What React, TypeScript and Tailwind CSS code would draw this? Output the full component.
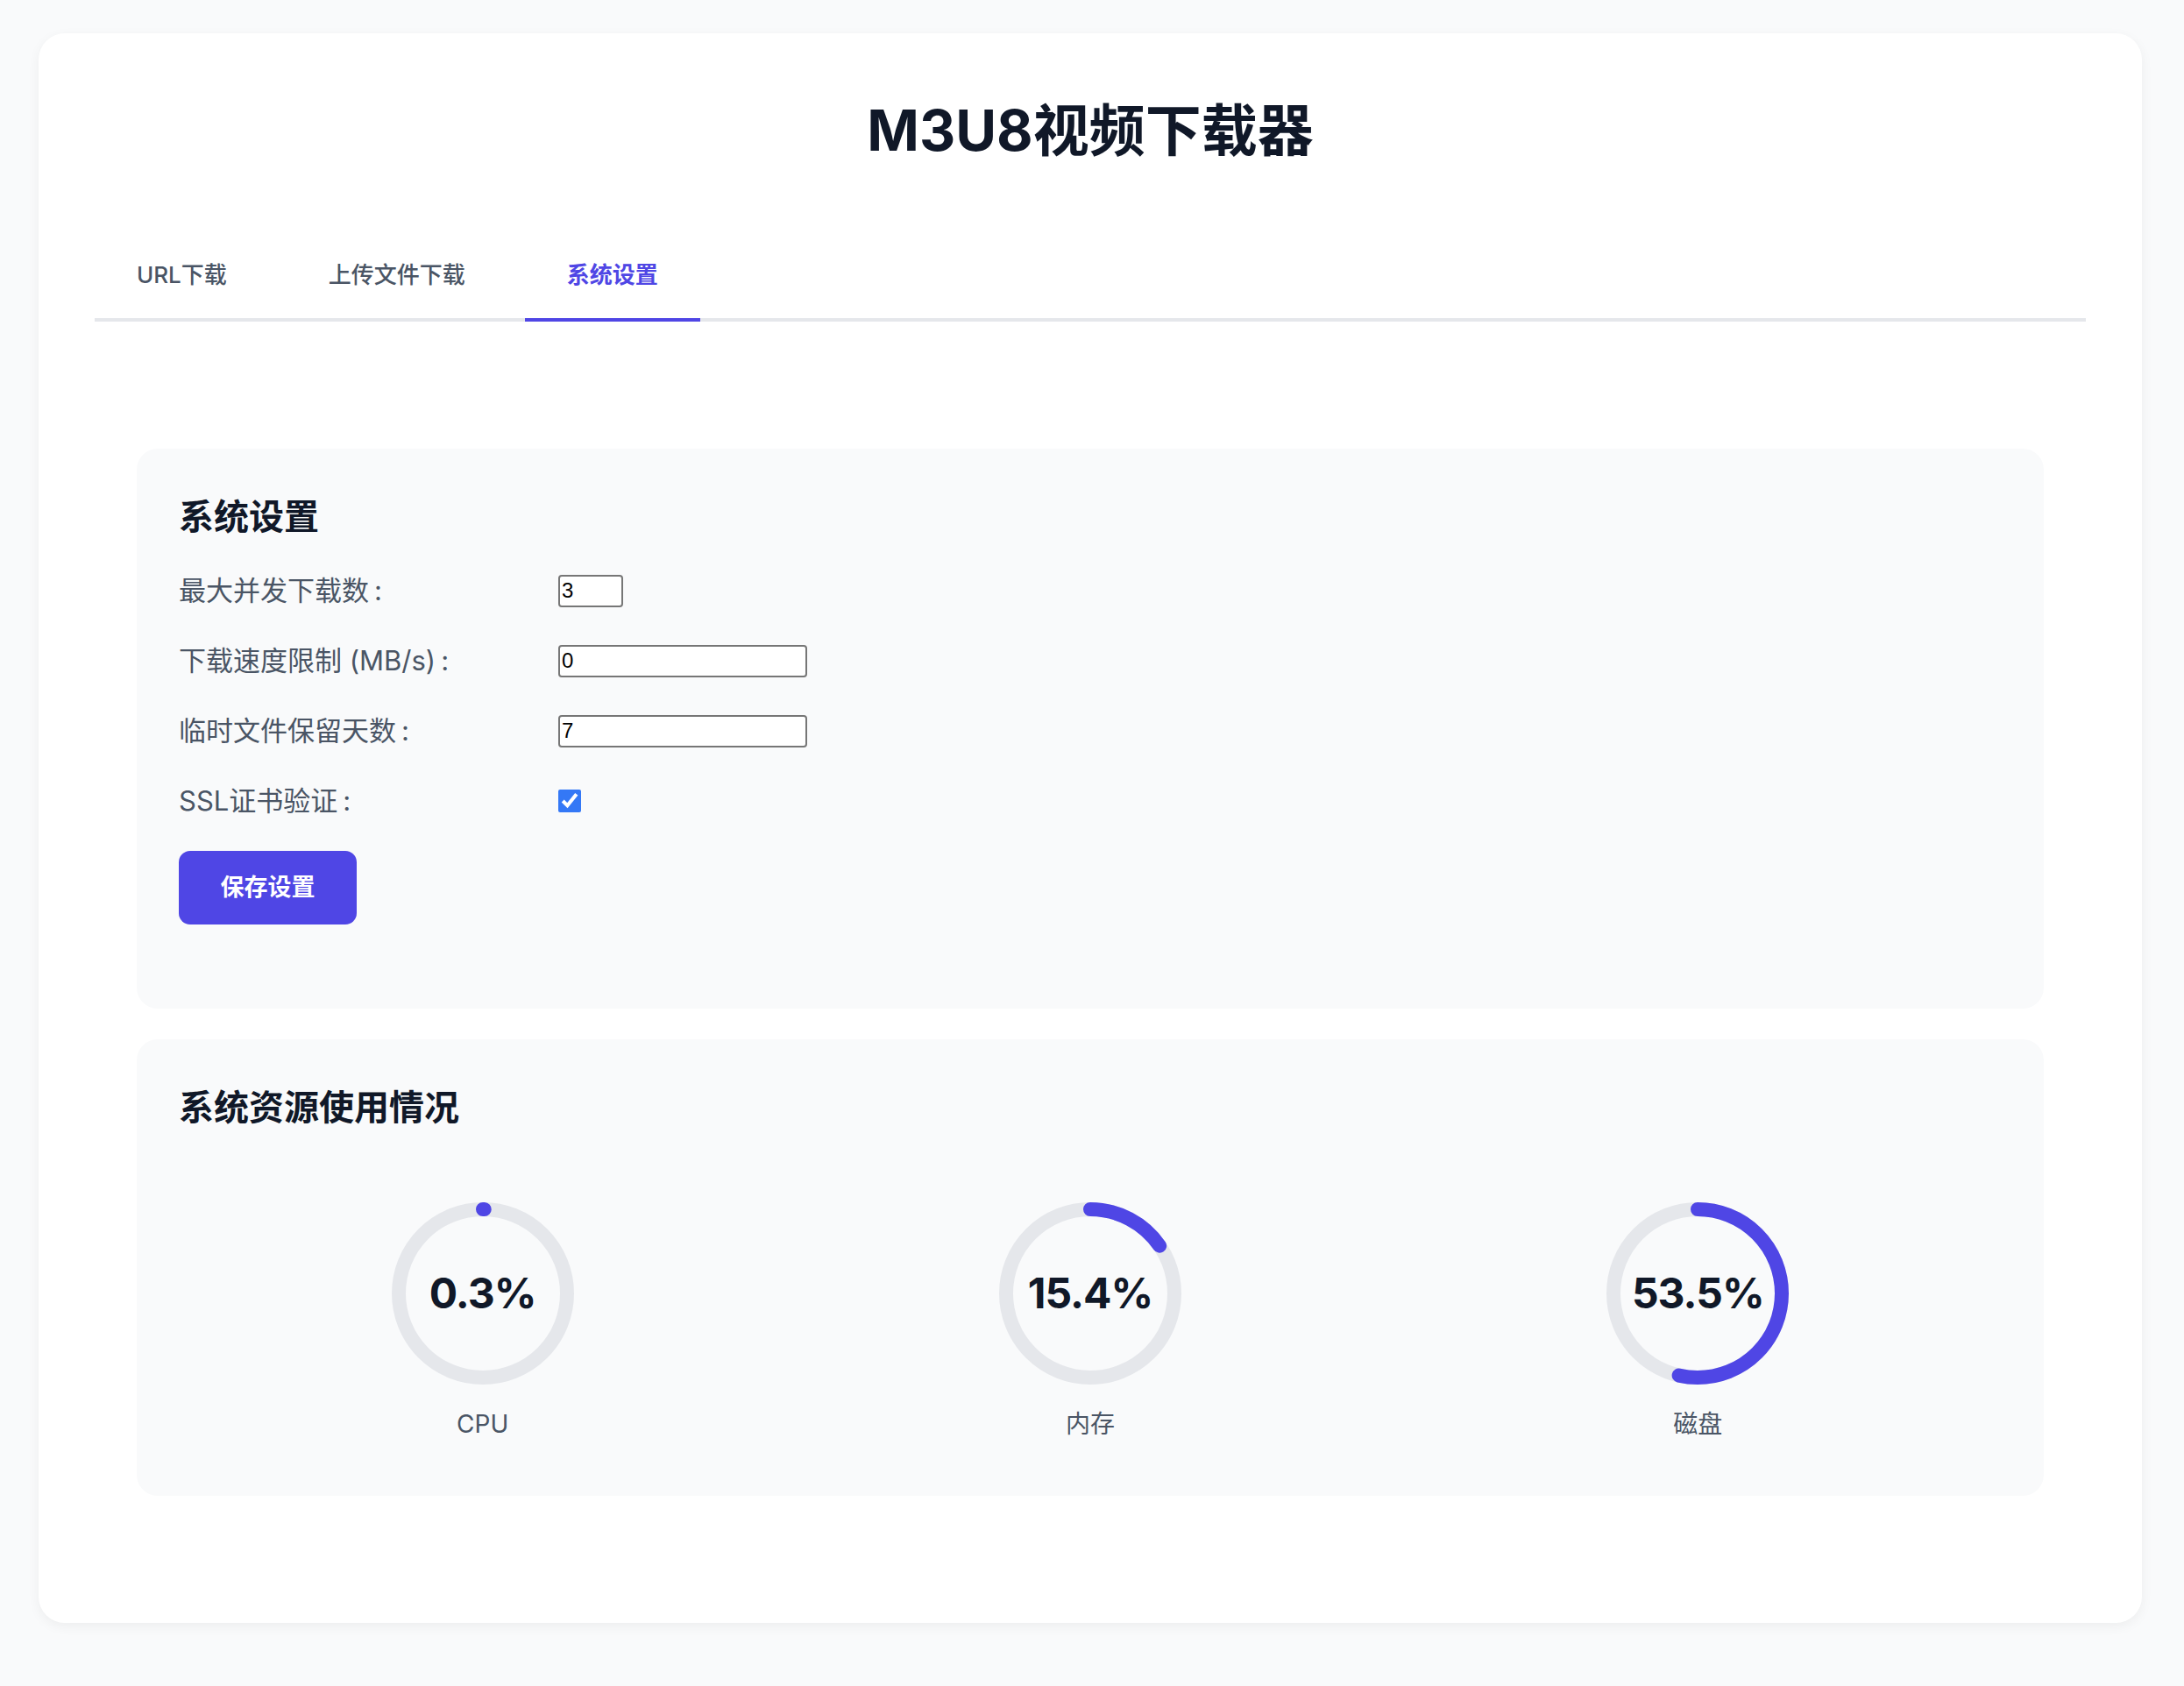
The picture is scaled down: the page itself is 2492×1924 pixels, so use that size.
import { useState } from "react";
import clsx from "clsx";

const FONT = { fontFamily: '"Inter", "Noto Sans CJK SC", sans-serif' };

const TABS = ["URL下载", "上传文件下载", "系统设置"];

function Gauge({ value, label }: { value: number; label: string }) {
  const r = 96;
  const c = 2 * Math.PI * r;
  return (
    <div className="flex flex-col items-center">
      <div className="relative h-[208px] w-[208px]">
        <svg width="208" height="208" viewBox="0 0 208 208" className="-rotate-90">
          <circle cx="104" cy="104" r={r} fill="none" stroke="#e5e7eb" strokeWidth="16" />
          <circle
            cx="104"
            cy="104"
            r={r}
            fill="none"
            stroke="#4f46e5"
            strokeWidth="16"
            strokeLinecap="round"
            strokeDasharray={`${(c * value) / 100} ${c}`}
          />
        </svg>
        <div className="absolute inset-0 flex items-center justify-center text-[48px] font-bold tracking-[-1px] text-gray-900">
          {value}%
        </div>
      </div>
      <p className="mt-[24px] text-[28px] leading-[42px] text-gray-600">{label}</p>
    </div>
  );
}

function Row({ label, children }: { label: string; children: React.ReactNode }) {
  return (
    <div className="flex h-[46px] items-center">
      <label className="w-[433px] shrink-0 text-[31px] leading-[46px] text-gray-600">
        {label}
        <span className="ml-[6px]">:</span>
      </label>
      {children}
    </div>
  );
}

const inputCls =
  "h-[37px] rounded-[4px] border-2 border-[#767676] bg-white px-[2px] text-[24px] text-black outline-none";

const inputFont = { fontFamily: '"Liberation Sans", sans-serif' };

export default function App() {
  const [tab, setTab] = useState(2);
  const [ssl, setSsl] = useState(true);

  return (
    <div className="min-h-screen bg-gray-50 pt-[38px] pb-[72px]" style={FONT}>
      <div className="ml-[44px] w-[2400px] rounded-[30px] bg-white px-[64px] pt-[72px] pb-[145px] shadow-[0_4px_14px_rgba(0,0,0,0.05)]">
        <h1 className="text-center text-[64px] font-bold leading-[77px] text-gray-900">M3U8视频下载器</h1>

        {/* tabs */}
        <div className="mt-[77px] flex gap-[20px] border-b-4 border-gray-200">
          {TABS.map((t, i) => (
            <button
              key={t}
              onClick={() => setTab(i)}
              className={clsx(
                "-mb-[4px] border-b-4 px-[48px] py-[30px] text-[26px] leading-[39px]",
                i === tab
                  ? "border-[#4f46e5] font-semibold text-[#4f46e5]"
                  : "border-transparent font-medium text-gray-600",
              )}
            >
              {t}
            </button>
          ))}
        </div>

        <div className="mt-[145px] px-[48px]">
          {/* settings */}
          <div className="rounded-[24px] bg-gray-50 px-[48px] pt-[49px] pb-[96px]">
            <h2 className="text-[40px] font-bold leading-[57px] text-gray-900">系统设置</h2>
            <div className="mt-[33px] flex flex-col gap-[34px]">
              <Row label="最大并发下载数">
                <input className={clsx(inputCls, "w-[74px]")} defaultValue="3" style={inputFont} />
              </Row>
              <Row label="下载速度限制 (MB/s)">
                <input className={clsx(inputCls, "w-[284px]")} defaultValue="0" style={inputFont} />
              </Row>
              <Row label="临时文件保留天数">
                <input className={clsx(inputCls, "w-[284px]")} defaultValue="7" style={inputFont} />
              </Row>
              <Row label="SSL证书验证">
                <input
                  type="checkbox"
                  checked={ssl}
                  onChange={(e) => setSsl(e.target.checked)}
                  className="h-[26px] w-[26px] accent-[#3478f6]"
                />
              </Row>
            </div>
            <button className="mt-[34px] h-[84px] w-[203px] rounded-[13px] bg-[#4f46e5] text-[27px] font-semibold text-white">
              保存设置
            </button>
          </div>

          {/* resources */}
          <div className="mt-[35px] rounded-[24px] bg-gray-50 px-[48px] pt-[49px] pb-[61px]">
            <h2 className="text-[40px] font-bold leading-[57px] text-gray-900">系统资源使用情况</h2>
            <div className="mt-[80px] grid grid-cols-3">
              <Gauge value={0.3} label="CPU" />
              <Gauge value={15.4} label="内存" />
              <Gauge value={53.5} label="磁盘" />
            </div>
          </div>
        </div>
      </div>
    </div>
  );
}
